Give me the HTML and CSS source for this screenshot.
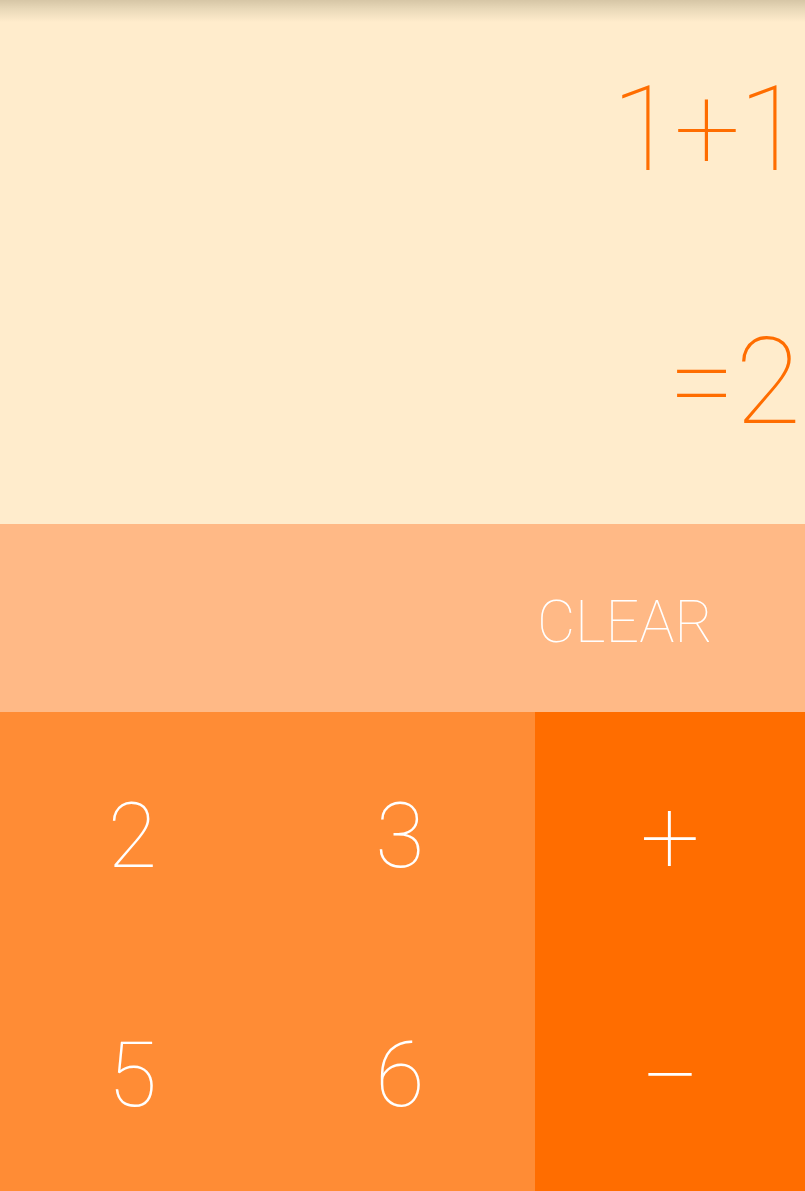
FILE: index.html
```html
<!DOCTYPE html>
<html>
<head>
<meta charset="utf-8">
<link rel="stylesheet" href="styles.css">
</head>
<body>
<div class="app">
  <div class="display">
    <div class="shadow"></div>
    <div class="formula">1+1</div>
    <div class="result">=2</div>
  </div>
  <div class="clear-row">
    <span class="clear">CLEAR</span>
  </div>
  <div class="pad">
    <div class="digits">
      <div class="key">2</div>
      <div class="key">3</div>
      <div class="key">5</div>
      <div class="key">6</div>
    </div>
    <div class="ops">
      <div class="key op">+</div>
      <div class="key op">&minus;</div>
    </div>
  </div>
</div>
</body>
</html>
```

FILE: styles.css
```css
html, body {
  margin: 0;
  padding: 0;
}
body {
  width: 805px;
  height: 1191px;
  overflow: hidden;
  font-family: Roboto, "Liberation Sans", sans-serif;
  font-weight: 100;
}
.app {
  display: flex;
  flex-direction: column;
  height: 1191px;
}
.display {
  position: relative;
  height: 524px;
  background: #FFECCC;
  color: #FF6D00;
  text-align: right;
  box-sizing: border-box;
  padding-top: 70px;
}
.shadow {
  position: absolute;
  left: 0;
  right: 0;
  top: 0;
  height: 22px;
  background: linear-gradient(to bottom, #D6C6A6 0%, #E8D8B8 40%, rgba(255,236,204,0) 100%);
}
.formula {
  font-size: 118px;
  line-height: 120px;
  padding-right: 4px;
  letter-spacing: -2px;
}
.result {
  margin-top: 132px;
  font-size: 120px;
  line-height: 120px;
  padding-right: 4px;
}
.clear-row {
  height: 188px;
  background: #FFB986;
  display: flex;
  align-items: center;
  justify-content: flex-end;
  padding-right: 92px;
}
.clear {
  color: #fff;
  font-size: 59px;
  line-height: 59px;
  padding-top: 6px;
}
.pad {
  flex: 1;
  display: flex;
}
.digits {
  width: 535px;
  background: #FF8C35;
  display: grid;
  grid-template-columns: 265px 270px;
  grid-template-rows: 1fr 1fr;
}
.ops {
  flex: 1;
  background: #FF6D00;
  display: grid;
  grid-template-rows: 1fr 1fr;
}
.key {
  display: flex;
  align-items: center;
  justify-content: center;
  color: #fff;
  font-size: 90px;
  line-height: 90px;
  padding-top: 10px;
}
.op {
  font-size: 106px;
  line-height: 106px;
  padding-top: 12px;
}
```
